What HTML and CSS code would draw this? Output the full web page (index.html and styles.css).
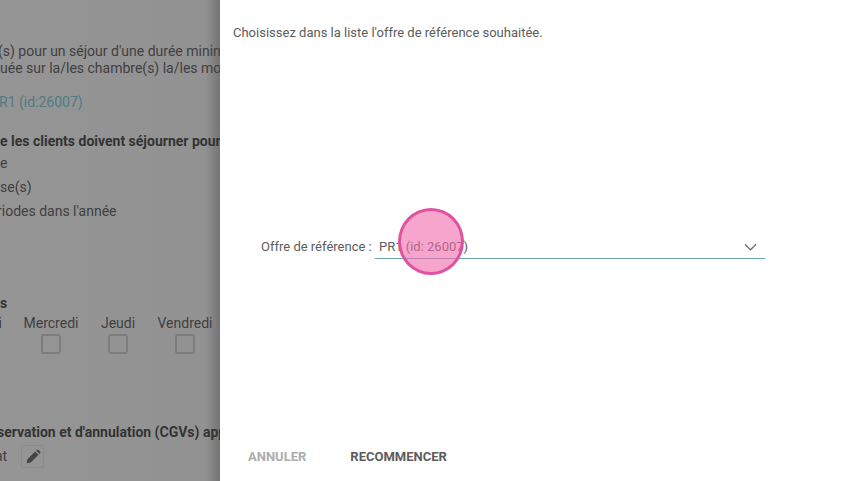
FILE: index.html
```html
<!DOCTYPE html>
<html lang="fr">
<head>
<meta charset="utf-8">
<title>Offre de référence</title>
<link rel="stylesheet" href="styles.css">
</head>
<body>
<div class="page">
  <section class="backdrop">
    <div class="intro">
      <p class="shift-s">(s) pour un séjour d'une durée minimale</p>
      <p>uée sur la/les chambre(s) la/les moins chères</p>
    </div>
    <p class="ref-link">R1 (id:26007)</p>
    <p class="bold stay-title">e les clients doivent séjourner pour bénéficier</p>
    <p class="opt opt-first">e</p>
    <p class="opt">se(s)</p>
    <p class="opt shift-m">riodes dans l'année</p>
    <p class="bold days-title">s</p>
    <div class="days">
      <div class="day"><span>Mardi</span><i class="box"></i></div>
      <div class="day"><span>Mercredi</span><i class="box"></i></div>
      <div class="day"><span>Jeudi</span><i class="box"></i></div>
      <div class="day"><span>Vendredi</span><i class="box"></i></div>
    </div>
    <p class="bold cgv-title">servation et d'annulation (CGVs) applicables</p>
    <div class="cgv-row">
      <span>at</span>
      <span class="edit">
        <svg viewBox="0 0 24 24" width="16" height="16"><path d="M2.5 21.5l1.2-6.2L15.2 3.8l5 5L8.7 20.3zM16.6 2.4l1-1a2 2 0 0 1 2.8 0l2.2 2.2a2 2 0 0 1 0 2.8l-1 1z"/></svg>
      </span>
    </div>
  </section>
  <section class="panel">
    <p class="instruction">Choisissez dans la liste l'offre de référence souhaitée.</p>
    <div class="field">
      <label class="field-label">Offre de référence :</label>
      <div class="select">
        <span>PR1 (id: 26007)</span>
        <svg class="chevron" viewBox="0 0 14 8" width="13" height="8"><path d="M1 1l6 6 6-6" fill="none" stroke="#707070" stroke-width="1.4"/></svg>
      </div>
    </div>
    <div class="actions">
      <span class="btn btn-off">ANNULER</span>
      <span class="btn btn-on">RECOMMENCER</span>
    </div>
  </section>
  <div class="spot"></div>
</div>
</body>
</html>
```

FILE: styles.css
```css
* { box-sizing: border-box; }
html, body { margin: 0; padding: 0; }
body { width: 860px; height: 481px; overflow: hidden; font-family: Roboto, "Liberation Sans", sans-serif; background: #fff; }
p { margin: 0; }
.page { position: relative; display: flex; width: 860px; height: 481px; }

.backdrop { flex: 0 0 220px; height: 481px; overflow: hidden; background: linear-gradient(to right, #959595 0, #929292 205px, #757575 220px); color: #404040; font-size: 14px; line-height: 17px; white-space: nowrap; padding-top: 43px; }
.intro p { height: 17px; }
.shift-s { margin-left: -2px; }
.shift-m { margin-left: -3px; }
.ref-link { margin-top: 17px; margin-left: -1px; color: #4f7b83; }
.bold { font-weight: 700; color: #333; }
.stay-title { margin-top: 22px; }
.opt { margin-top: 7px; }
.opt-first { margin-top: 5px; }
.days-title { margin-top: 75px; }
.days { display: grid; grid-template-columns: repeat(4, 67px); margin-left: -49.5px; margin-top: 3px; }
.day { display: flex; flex-direction: column; align-items: center; gap: 2px; }
.box { display: block; width: 20px; height: 20px; border: 2px solid #7d7d7d; border-radius: 3px; }
.cgv-title { margin-top: 70px; margin-left: -3px; }
.cgv-row { display: flex; align-items: center; gap: 14px; margin-top: 4px; margin-left: -5px; color: #404040; }
.edit { display: flex; align-items: center; justify-content: center; width: 23px; height: 23px; border: 1px solid #8c8c8c; border-radius: 2px; fill: #444; }

.panel { position: relative; flex: 1; display: flex; flex-direction: column; background: #fff; color: #5c5c5c; font-size: 13px; padding: 25px 0 0 13px; }
.instruction { line-height: 16px; }
.field { display: flex; align-items: center; margin-top: 192px; margin-left: 28px; }
.field-label { width: 114px; line-height: 16px; margin-top: 2px; }
.select { display: flex; align-items: center; justify-content: space-between; width: 390px; height: 26px; padding: 2px 8px 0 4px; border-bottom: 1px solid #6ba5aa; }
.chevron { display: block; }
.actions { display: flex; gap: 44px; margin-top: auto; margin-left: 15px; padding-bottom: 16px; font-weight: 700; line-height: 16px; }
.btn-off { color: #adadad; }
.btn-on { color: #5c5c5c; }

.spot { position: absolute; left: 398px; top: 208px; width: 66px; height: 67px; border-radius: 50%; background: rgba(240, 105, 170, 0.6); border: 3px solid #e0529f; }
```
